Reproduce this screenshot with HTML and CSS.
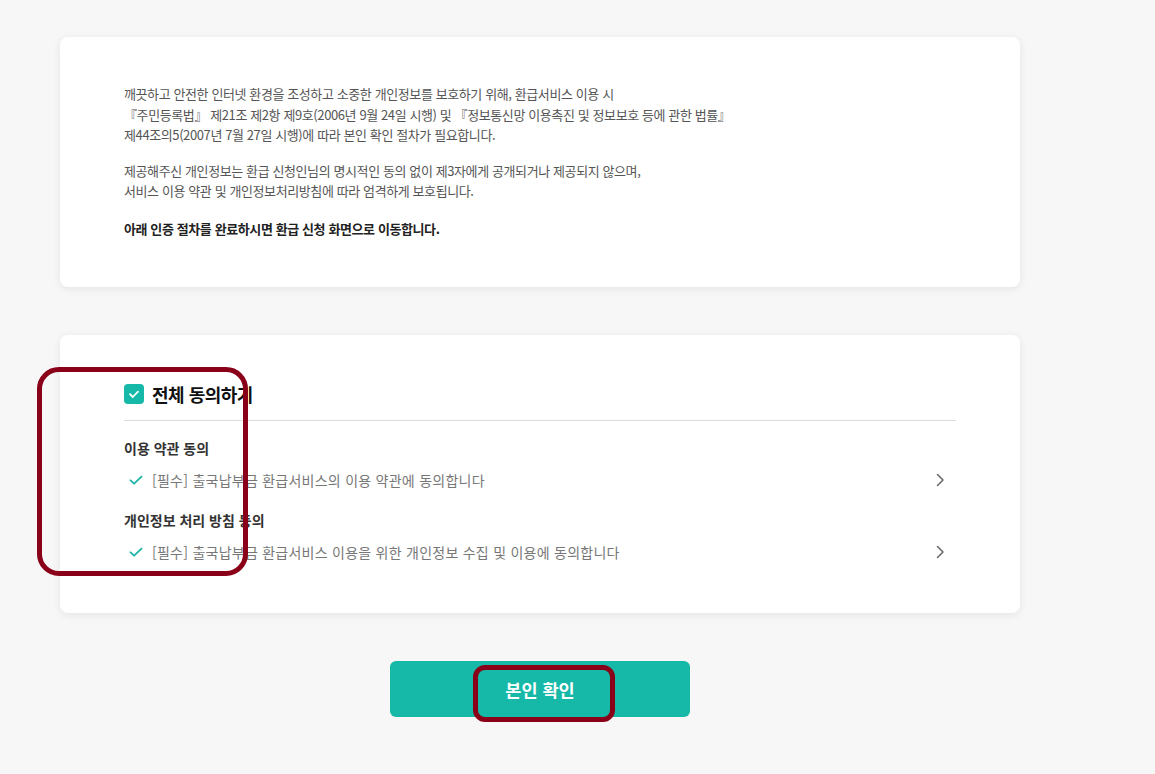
FILE: index.html
```html
<!DOCTYPE html>
<html lang="ko">
  <head>
    <meta charset="UTF-8" />
    <meta name="viewport" content="width=device-width, initial-scale=1.0" />
    <title>본인 확인</title>
    <link rel="stylesheet" href="styles.css">
  </head>
  <body>
    <div class="page">
      <!-- Notice -->
      <div class="card notice">
        <p>
          깨끗하고 안전한 인터넷 환경을 조성하고 소중한 개인정보를 보호하기 위해, 환급서비스 이용 시<br />
          『주민등록법』 제21조 제2항 제9호(2006년 9월 24일 시행) 및 『정보통신망 이용촉진 및 정보보호 등에 관한 법률』<br />
          제44조의5(2007년 7월 27일 시행)에 따라 본인 확인 절차가 필요합니다.
        </p>
        <p>
          제공해주신 개인정보는 환급 신청인님의 명시적인 동의 없이 제3자에게 공개되거나 제공되지 않으며,<br />
          서비스 이용 약관 및 개인정보처리방침에 따라 엄격하게 보호됩니다.
        </p>
        <p class="strong">아래 인증 절차를 완료하시면 환급 신청 화면으로 이동합니다.</p>
      </div>

      <!-- Agreements -->
      <div class="card agree">
        <div class="agree-all">
          <span class="checkbox">
            <svg width="14" height="14" viewBox="0 0 14 14"><path d="M3 7.2l2.8 2.8L11 4.6" fill="none" stroke="#fff" stroke-width="1.8" stroke-linecap="round" stroke-linejoin="round"/></svg>
          </span>
          <span class="agree-all-label">전체 동의하기</span>
        </div>

        <h4 class="group-title">이용 약관 동의</h4>
        <div class="agree-item">
          <svg class="check" width="16" height="16" viewBox="0 0 16 16"><path d="M2.5 8.3l3.6 3.4 7.4-7" fill="none" stroke="#1ab6a4" stroke-width="1.8" stroke-linecap="round" stroke-linejoin="round"/></svg>
          <span class="item-text">[필수] 출국납부금 환급서비스의 이용 약관에 동의합니다</span>
          <svg class="chevron" width="16" height="16" viewBox="0 0 16 16"><path d="M5.5 2.5l5.5 5.5-5.5 5.5" fill="none" stroke="#666" stroke-width="1.5" stroke-linecap="round" stroke-linejoin="round"/></svg>
        </div>

        <h4 class="group-title">개인정보 처리 방침 동의</h4>
        <div class="agree-item">
          <svg class="check" width="16" height="16" viewBox="0 0 16 16"><path d="M2.5 8.3l3.6 3.4 7.4-7" fill="none" stroke="#1ab6a4" stroke-width="1.8" stroke-linecap="round" stroke-linejoin="round"/></svg>
          <span class="item-text">[필수] 출국납부금 환급서비스 이용을 위한 개인정보 수집 및 이용에 동의합니다</span>
          <svg class="chevron" width="16" height="16" viewBox="0 0 16 16"><path d="M5.5 2.5l5.5 5.5-5.5 5.5" fill="none" stroke="#666" stroke-width="1.5" stroke-linecap="round" stroke-linejoin="round"/></svg>
        </div>

        <div class="mark mark-list"></div>
      </div>

      <div class="actions">
        <button class="confirm-btn">본인 확인</button>
        <div class="mark mark-btn"></div>
      </div>
    </div>
  </body>
</html>
```

FILE: styles.css
```css
:root {
  --teal: #16b8a8;
  --mark: #8a0019;
  --radius: 8px;
}

body {
  margin: 0;
  background-color: #f7f7f7;
  font-family: "Noto Sans CJK KR", "Noto Sans", sans-serif;
  color: #222;
}

.page {
  width: 960px;
  padding: 37px 0 40px 60px;
  display: flex;
  flex-direction: column;
  gap: 48px;
}

.card {
  position: relative;
  background: #fff;
  border-radius: var(--radius);
  box-shadow: 0 2px 8px rgba(0, 0, 0, 0.08);
  box-sizing: border-box;
}

/* notice card */
.notice {
  height: 250px;
  padding: 47px 64px 0;
}

.notice p {
  margin: 0 0 15px;
  font-size: 13px;
  line-height: 20.5px;
  letter-spacing: -0.4px;
  color: #555;
}

.notice p.strong {
  margin-top: 17px;
  font-weight: 700;
  color: #222;
}

/* agreement card */
.agree {
  height: 278px;
  padding: 46px 64px 0;
}

.agree-all {
  display: flex;
  align-items: center;
  gap: 8px;
  padding-bottom: 13px;
  border-bottom: 1px solid #dcdcdc;
}

.checkbox {
  width: 20px;
  height: 20px;
  border-radius: 4px;
  background: var(--teal);
  display: flex;
  align-items: center;
  justify-content: center;
}

.agree-all-label {
  font-size: 18px;
  line-height: 26px;
  font-weight: 700;
  letter-spacing: -0.5px;
  color: #111;
}

.group-title {
  margin: 17px 0 12px;
  font-size: 14px;
  line-height: 20px;
  font-weight: 700;
  letter-spacing: 0;
  color: #333;
}

.agree-item + .group-title {
  margin-top: 20px;
}

.agree-item {
  display: flex;
  align-items: center;
  padding: 0 8px 0 4px;
}

.agree-item .check {
  margin-right: 8px;
}

.item-text {
  flex: 1;
  font-size: 14px;
  line-height: 20px;
  letter-spacing: 0.25px;
  color: #777;
}

/* button */
.actions {
  position: relative;
  display: flex;
  justify-content: center;
}

.confirm-btn {
  width: 300px;
  height: 56px;
  border: none;
  border-radius: 6px;
  background: var(--teal);
  color: #fff;
  font-family: inherit;
  font-size: 17.5px;
  font-weight: 700;
  letter-spacing: 0;
  cursor: pointer;
}

/* red review marks drawn over the screenshot */
.mark {
  position: absolute;
  border: 5px solid var(--mark);
  box-sizing: border-box;
  pointer-events: none;
}

.mark-list {
  left: -23px;
  top: 32px;
  width: 211px;
  height: 209px;
  border-radius: 22px;
}

.mark-btn {
  left: 413px;
  top: 4px;
  width: 142px;
  height: 57px;
  border-radius: 12px;
}
```
